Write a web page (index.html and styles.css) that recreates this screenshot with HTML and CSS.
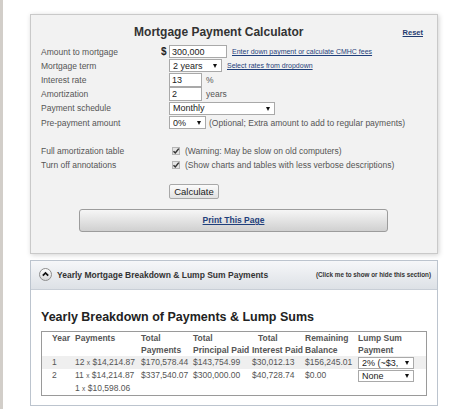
FILE: index.html
```html
<html>

<head>
    <link rel="stylesheet" href="styles.css">
</head>

<body>
    <div class="page">
        <div class="calc">
            <div class="calcHead">
                <h2>Mortgage Payment Calculator</h2>
                <a class="reset" href="#">Reset</a>
            </div>

            <div class="form">
                <label>Amount to mortgage</label>
                <div class="field">
                    <b class="dollar">$</b><input class="txt wAmt" type="text" value="300,000" />
                    <a class="smallLink" href="#">Enter down payment or calculate CMHC fees</a>
                </div>

                <label>Mortgage term</label>
                <div class="field">
                    <span class="sel wTerm"><select><option>2 years</option></select></span>
                    <a class="smallLink" href="#">Select rates from dropdown</a>
                </div>

                <label>Interest rate</label>
                <div class="field">
                    <input class="txt wShort" type="text" value="13" /><span class="unit">%</span>
                </div>

                <label>Amortization</label>
                <div class="field">
                    <input class="txt wShort" type="text" value="2" /><span class="unit">years</span>
                </div>

                <label>Payment schedule</label>
                <div class="field">
                    <span class="sel wSched"><select><option>Monthly</option></select></span>
                </div>

                <label>Pre-payment amount</label>
                <div class="field">
                    <span class="sel wPre"><select><option>0%</option></select></span>
                    <span class="note">(Optional; Extra amount to add to regular payments)</span>
                </div>
            </div>

            <div class="form checks">
                <label>Full amortization table</label>
                <div class="field">
                    <span class="chk"><svg width="8" height="8" viewBox="0 0 8 8"><path d="M1.5 4.2 L3.3 6 L6.8 1.6" fill="none" stroke="#333" stroke-width="1.5"/></svg></span>
                    <span class="note">(Warning: May be slow on old computers)</span>
                </div>

                <label>Turn off annotations</label>
                <div class="field">
                    <span class="chk"><svg width="8" height="8" viewBox="0 0 8 8"><path d="M1.5 4.2 L3.3 6 L6.8 1.6" fill="none" stroke="#333" stroke-width="1.5"/></svg></span>
                    <span class="note">(Show charts and tables with less verbose descriptions)</span>
                </div>
            </div>

            <button class="btnCalc" type="button">Calculate</button>

            <div class="btnPrint"><a href="#">Print This Page</a></div>
        </div>

        <div class="panel">
            <div class="panelHead">
                <span class="toggle"><svg width="11" height="11" viewBox="0 0 11 11"><path d="M2.8 6.6 L5.5 3.9 L8.2 6.6" fill="none" stroke="#111" stroke-width="1.8"/></svg></span>
                <span class="panelTitle">Yearly Mortgage Breakdown &amp; Lump Sum Payments</span>
                <span class="clickNote">(Click me to show or hide this section)</span>
            </div>
            <div class="panelBody">
                <h3>Yearly Breakdown of Payments &amp; Lump Sums</h3>
                <table class="yearly">
                    <colgroup>
                        <col style="width:31px">
                        <col style="width:66px">
                        <col style="width:52px">
                        <col style="width:59px">
                        <col style="width:53px">
                        <col style="width:53px">
                        <col style="width:70px">
                    </colgroup>
                    <tr>
                        <th class="yr">Year</th>
                        <th>Payments</th>
                        <th>Total<br />Payments</th>
                        <th>Total<br />Principal Paid</th>
                        <th><span class="indent">Total</span><br />Interest Paid</th>
                        <th>Remaining<br />Balance</th>
                        <th>Lump Sum<br />Payment</th>
                    </tr>
                    <tr class="odd">
                        <td class="yr">1</td>
                        <td>12 <small>x</small> $14,214.87</td>
                        <td>$170,578.44</td>
                        <td>$143,754.99</td>
                        <td>$30,012.13</td>
                        <td>$156,245.01</td>
                        <td><span class="sel wLump"><select><option>2% (~$3,</option></select></span></td>
                    </tr>
                    <tr>
                        <td class="yr">2</td>
                        <td>11 <small>x</small> $14,214.87<br />1 <small>x</small> $10,598.06</td>
                        <td>$337,540.07</td>
                        <td>$300,000.00</td>
                        <td>$40,728.74</td>
                        <td>$0.00</td>
                        <td><span class="sel wLump"><select><option>None</option></select></span></td>
                    </tr>
                </table>
            </div>
        </div>
    </div>
</body>

</html>
```

FILE: styles.css
```css
body {
    margin: 0;
    padding: 0;
    min-height: 100vh;
    box-sizing: border-box;
    border-left: 3px solid #d2cec9;
    background: #fff;
    font-family: "Liberation Sans", Arial, sans-serif;
    font-size: 8.5px;
    color: #555;
}

.page {
    padding: 14px 0 0 27px;
    width: 408px;
}

/* calculator box */
.calc {
    width: 408px;
    box-sizing: border-box;
    padding: 10px 14px 21px 10px;
    background: #f2f2f2;
    border: 1px solid #c9c9c9;
    box-shadow: 1px 1px 5px rgba(0, 0, 0, 0.18);
}

.calcHead {
    display: flex;
    align-items: center;
    height: 14px;
}

.calcHead h2 {
    flex: 1;
    margin: 0;
    text-align: center;
    font-size: 12px;
    line-height: 14px;
    color: #333;
}

.reset {
    margin-left: 6px;
    font-size: 7.5px;
    font-weight: bold;
    color: #1f3a70;
}

.form {
    display: grid;
    grid-template-columns: 128px auto;
    grid-auto-rows: 14.2px;
    align-items: center;
    margin-top: 5.5px;
}

.form label {
    color: #555;
}

.field {
    display: flex;
    align-items: center;
    white-space: nowrap;
}

.dollar {
    width: 8px;
    margin-left: -8px;
    font-size: 10px;
    color: #222;
}

.txt {
    height: 13px;
    box-sizing: border-box;
    margin: 0;
    padding: 0 2px;
    border: 1px solid #a9a9a9;
    background: #fff;
    font-family: "Liberation Sans", Arial, sans-serif;
    font-size: 9px;
    color: #222;
}

.wAmt { width: 58px; }
.wShort { width: 33px; height: 14px; }

.unit {
    margin-left: 4px;
}

.smallLink {
    margin-left: 5px;
    font-size: 7px;
    color: #1f3f7b;
}

.note {
    margin-left: 3px;
}

.sel {
    position: relative;
    display: inline-block;
    height: 13px;
}

.sel select {
    appearance: none;
    -webkit-appearance: none;
    width: 100%;
    height: 100%;
    box-sizing: border-box;
    margin: 0;
    padding: 0 0 0 3px;
    border: 1px solid #a9a9a9;
    border-radius: 0;
    background: #fff;
    font-family: "Liberation Sans", Arial, sans-serif;
    font-size: 9px;
    color: #222;
}

.sel::after {
    content: "";
    position: absolute;
    right: 5px;
    top: 5px;
    border-left: 2.5px solid transparent;
    border-right: 2.5px solid transparent;
    border-top: 4px solid #111;
}

.wTerm { width: 53px; }
.wSched { width: 106px; }
.wPre { width: 37px; }
.wLump { width: 56px; height: 12px; margin-top: 1px; }
.wLump::after { top: 4px; }

.checks {
    grid-auto-rows: 14px;
    margin-top: 14px;
}

.chk {
    display: inline-block;
    width: 8px;
    height: 8px;
    margin-left: 3px;
    margin-right: 2px;
    box-sizing: border-box;
    background: #e4e4e4;
    border: 1px solid #b5b5b5;
    line-height: 0;
}

.chk svg {
    margin: -1px 0 0 -1px;
}

.btnCalc {
    display: block;
    margin: 12px 0 0 128px;
    width: 50px;
    height: 15px;
    padding: 0;
    border: 1px solid #a8a8a8;
    border-radius: 2px;
    background: linear-gradient(#fbfbfb, #e2e2e2);
    font-family: "Liberation Sans", Arial, sans-serif;
    font-size: 9.5px;
    color: #222;
}

.btnPrint {
    margin: 10px 0 0 38px;
    width: 309px;
    height: 23px;
    box-sizing: border-box;
    border: 1px solid #9c9c9c;
    border-radius: 3px;
    background: linear-gradient(#f6f6f6, #d0d0d0);
    display: flex;
    align-items: center;
    justify-content: center;
}

.btnPrint a {
    font-weight: bold;
    color: #1f3f7b;
}

/* yearly section */
.panel {
    width: 408px;
    box-sizing: border-box;
    margin-top: 6px;
    border: 1px solid #bcc4ce;
    background: #fff;
}

.panelHead {
    display: flex;
    align-items: center;
    height: 28px;
    padding: 0 6px 0 8px;
    border-bottom: 1px solid #c8ced6;
    background: linear-gradient(#f6f7f9, #dde1e6);
}

.toggle {
    width: 13px;
    height: 13px;
    box-sizing: border-box;
    border: 1px solid #8c8c8c;
    border-radius: 50%;
    background: linear-gradient(#ffffff, #d8d8d8);
    line-height: 0;
}

.panelTitle {
    margin-left: 5px;
    font-weight: bold;
    color: #333;
}

.clickNote {
    margin-left: auto;
    font-size: 6.3px;
    font-weight: bold;
    color: #333;
}

.panelBody {
    padding: 20px 10px 9px 10px;
}

.panelBody h3 {
    margin: 0 0 6px 0;
    font-size: 12.5px;
    line-height: 15px;
    color: #222;
}

.yearly {
    width: 386px;
    table-layout: fixed;
    border: 1px solid #9a9a9a;
    border-collapse: separate;
    border-spacing: 0;
    font-family: "Liberation Sans", Arial, sans-serif;
    font-size: 8.5px;
    color: #555;
}

.yearly th,
.yearly td {
    padding: 0 0 0 2px;
    text-align: left;
    vertical-align: top;
    white-space: nowrap;
    overflow: hidden;
}

.yearly th {
    line-height: 12px;
    font-weight: bold;
    color: #555;
}

.yearly td {
    line-height: 12.2px;
    color: #555;
}

.yearly .yr {
    padding-left: 10px;
}

.yearly .odd td {
    background: #efefef;
}

.yearly small {
    font-size: 6.5px;
}

.indent {
    margin-left: 6px;
}
```
